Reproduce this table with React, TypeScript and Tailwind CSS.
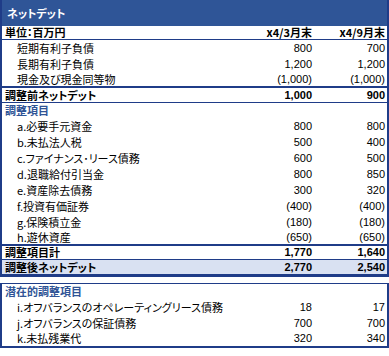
import React from "react";

type Row = {
  label: string;
  a?: string;
  b?: string;
  kind?: "head" | "item" | "total" | "section" | "final";
  h: string;
  line?: string;
};

const jp = "font-['Noto_Sans_CJK_JP',sans-serif] [font-feature-settings:'palt']";
const num = "font-['Liberation_Sans',Arial,sans-serif] text-[11px] text-right";

const mainRows: Row[] = [
  { label: "単位：百万円", a: "x4/3月末", b: "x4/9月末", kind: "head", h: "h-[14px]", line: "border-b border-[#1f3c88]" },
  { label: "短期有利子負債", a: "800", b: "700", kind: "item", h: "h-[16px]" },
  { label: "長期有利子負債", a: "1,200", b: "1,200", kind: "item", h: "h-[16px]" },
  { label: "現金及び現金同等物", a: "(1,000)", b: "(1,000)", kind: "item", h: "h-[16px]", line: "border-b-2 border-[#1f3c88]" },
  { label: "調整前ネットデット", a: "1,000", b: "900", kind: "total", h: "h-[15px]", line: "border-b border-[#1f3c88]" },
  { label: "調整項目", kind: "section", h: "h-[15px]" },
  { label: "a.必要手元資金", a: "800", b: "800", kind: "item", h: "h-[16px]" },
  { label: "b.未払法人税", a: "500", b: "400", kind: "item", h: "h-[16px]" },
  { label: "c.ファイナンス･リース債務", a: "600", b: "500", kind: "item", h: "h-[16px]" },
  { label: "d.退職給付引当金", a: "800", b: "850", kind: "item", h: "h-[16px]" },
  { label: "e.資産除去債務", a: "300", b: "320", kind: "item", h: "h-[16px]" },
  { label: "f.投資有価証券", a: "(400)", b: "(400)", kind: "item", h: "h-[16px]" },
  { label: "g.保険積立金", a: "(180)", b: "(180)", kind: "item", h: "h-[16px]" },
  { label: "h.遊休資産", a: "(650)", b: "(650)", kind: "item", h: "h-[16px]", line: "border-b-2 border-[#1f3c88]" },
  { label: "調整項目計", a: "1,770", b: "1,640", kind: "total", h: "h-[14px]", line: "border-b border-[#1f3c88]" },
  { label: "調整後ネットデット", a: "2,770", b: "2,540", kind: "final", h: "h-[14px]" },
];

const subRows: Row[] = [
  { label: "潜在的調整項目", kind: "section", h: "h-[15px]" },
  { label: "i.オフバランスのオペレーティングリース債務", a: "18", b: "17", kind: "item", h: "h-[16px]" },
  { label: "j.オフバランスの保証債務", a: "700", b: "700", kind: "item", h: "h-[16px]" },
  { label: "k.未払残業代", a: "320", b: "340", kind: "item", h: "h-[15px]" },
];

const TableRow = ({ row }: { row: Row }) => {
  const bold = row.kind !== "item";
  const labelColor = row.kind === "section" ? "text-[#2f5496]" : "text-black";
  const bg = row.kind === "final" ? "bg-[#d9e1f2]" : "";
  return (
    <div className={`grid grid-cols-[1fr_72px_75px] items-center ${row.h} ${row.line ?? ""} ${bg}`}>
      <span
        className={`${jp} text-[11px] leading-none whitespace-nowrap ${labelColor} ${bold ? "font-bold pl-[3px]" : "pl-[15px]"}`}
      >
        {row.label}
      </span>
      <span className={`${row.kind === "head" ? jp : num} text-[11px] leading-none text-right text-black ${bold ? "font-bold" : ""}`}>
        {row.a}
      </span>
      <span className={`${row.kind === "head" ? jp : num} text-[11px] leading-none text-right text-black pr-[2px] ${bold ? "font-bold" : ""}`}>
        {row.b}
      </span>
    </div>
  );
};

const App = () => {
  return (
    <main className="w-[389px] h-[356px] bg-white overflow-hidden">
      <section className="border-x-2 border-b-[3px] border-[#1f3c88]">
        <header className={`h-[26px] bg-[#2f5597] flex items-center pl-[5px] text-white font-bold text-[11px] ${jp}`}>
          ネットデット
        </header>
        {mainRows.map((r) => (
          <TableRow key={r.label} row={r} />
        ))}
      </section>
      <section className="mt-[6px] border-x-2 border-t border-b-2 border-[#1f3c88]">
        {subRows.map((r) => (
          <TableRow key={r.label} row={r} />
        ))}
      </section>
    </main>
  );
};

export default App;
